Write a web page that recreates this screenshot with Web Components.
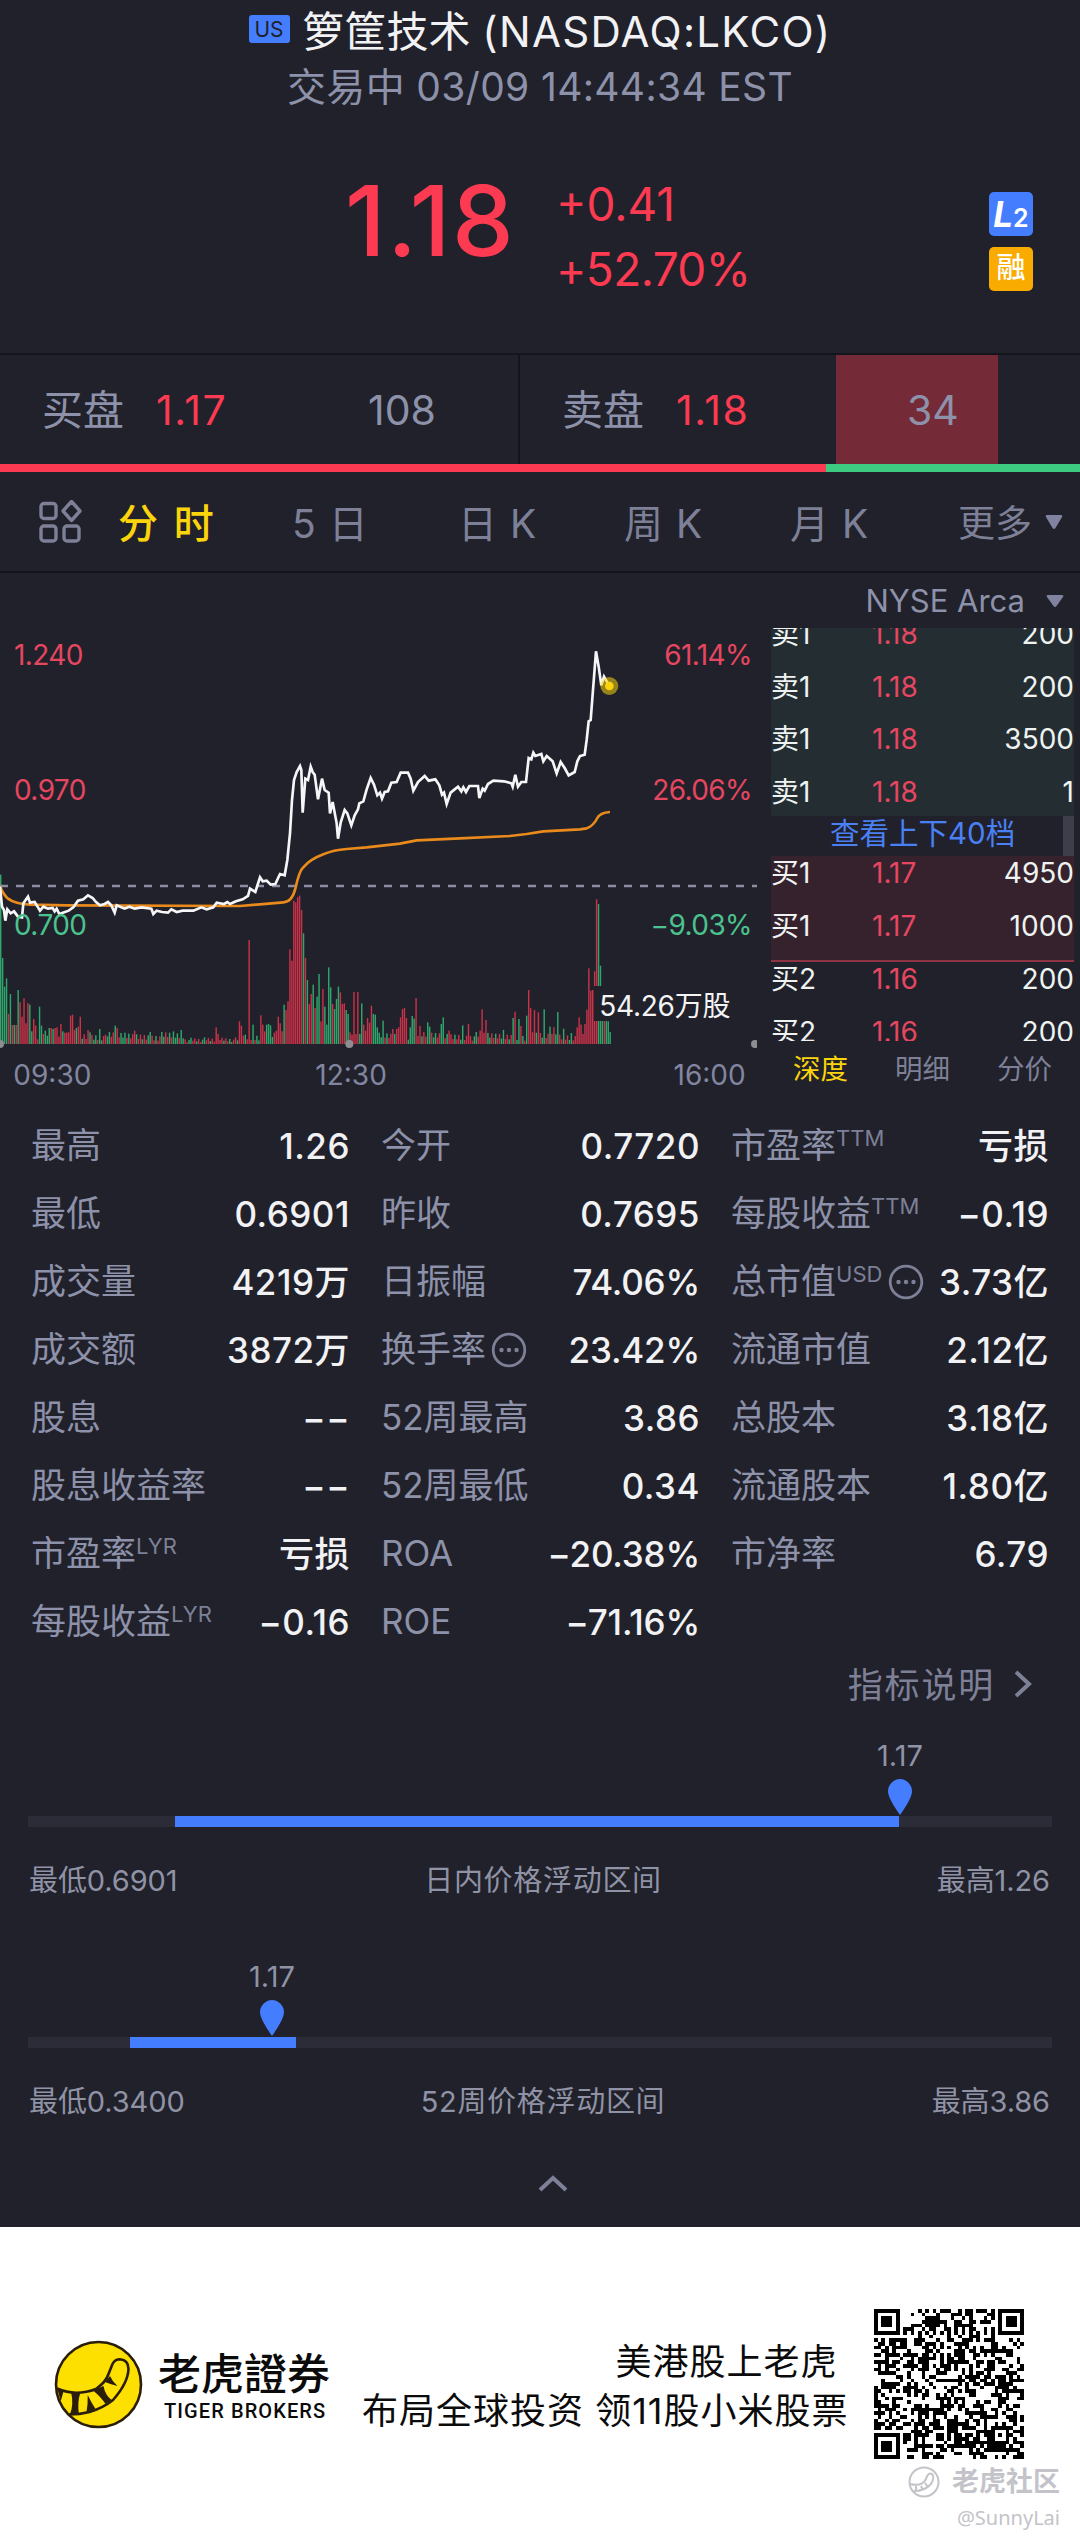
<!DOCTYPE html>
<html lang="zh-CN">
<head>
<meta charset="UTF-8">
<title>箩筐技术 LKCO</title>
<style>
    body {
        margin: 0;
        width: 1080px;
        background: #20212a;
        color: #8d91a9;
        font-family: Inter, "Noto Sans CJK SC", sans-serif;
        --red: #fc3a51;
        --green: #3dcb81;
        --blue: #447dfe;
        --muted: #7d8097;
        --label: #8d91a9;
        --text: #f2f2f5;
        --line: #14141c;
        --yellow: #fbd40c;
    }
</style>
</head>
<body>
<stock-header market="US" status="交易中 03/09 14:44:34 EST">箩筐技术 <span style="letter-spacing:1.300px">(NASDAQ:LKCO)</span></stock-header>
<quote-panel price="1.18" change="+0.41" percent="+52.70%"></quote-panel>
<bid-ask></bid-ask>
<period-tabs></period-tabs>
<chart-section>
    <price-chart slot="chart"></price-chart>
    <order-depth slot="depth"></order-depth>
</chart-section>
<stats-grid></stats-grid>
<price-range value="1.17" low="最低0.6901" high="最高1.26" name="日内价格浮动区间" from="147" to="871" pin="872"></price-range>
<price-range value="1.17" low="最低0.3400" high="最高3.86" name="52周价格浮动区间" from="102" to="268" pin="244"></price-range>
<collapse-arrow></collapse-arrow>
<brand-footer></brand-footer>

<script>
// Base class: puts the markup of each element in its open shadow root
class BaseElement extends HTMLElement {
    connectedCallback(){
        if(this.shadowRoot) return;
        this.attachShadow({mode: 'open'});
        const template = document.createElement('template');
        template.innerHTML = this.render();
        this.shadowRoot.appendChild(template.content.cloneNode(true));
    }
    attr(name){
        return this.getAttribute(name) || '';
    }
}

// Stock name and trading status
class StockHeader extends BaseElement {
    render(){
        return `
            <style>
                :host { display: block; height: 112px; text-align: center; }
                .name {
                    display: flex;
                    justify-content: center;
                    align-items: center;
                    gap: 13px;
                    height: 57px;
                    padding-bottom: 5px;
                    font-size: 42px;
                    color: var(--text);
                    white-space: pre;
                }
                .market {
                    width: 41px;
                    height: 28px;
                    border-radius: 3px;
                    background: var(--blue);
                    color: #20212a;
                    font-size: 21px;
                    line-height: 29px;
                }
                .status { font-size: 39px; line-height: 50px; letter-spacing: .350px; }
            </style>
            <div class="name"><span class="market">${this.attr('market')}</span><span><slot></slot></span></div>
            <div class="status">${this.attr('status')}</div>
        `;
    }
}
customElements.define('stock-header', StockHeader);

// Last price with the change and the account badges
class QuotePanel extends BaseElement {
    render(){
        return `
            <style>
                :host {
                    display: flex;
                    align-items: flex-start;
                    box-sizing: border-box;
                    height: 241px;
                    padding: 60px 47px 0 345px;
                    color: var(--red);
                }
                .price { font-size: 98px; line-height: 98px; font-weight: 450; width: 211px; letter-spacing: 1.500px; }
                .change { font-size: 46px; line-height: 65px; }
                .change div:last-child { letter-spacing: -.600px; }
                .badges { margin: 20px 0 0 auto; display: grid; gap: 11px; }
                .badge { width: 44px; height: 44px; border-radius: 5px; background: var(--blue); color: #fff; text-align: center; line-height: 44px; }
                .badge i { font-size: 35px; font-weight: 700; }
                .badge b { font-size: 25px; font-weight: 600; }
                .margin { background: #f9ab00; font-size: 29px; line-height: 42px; font-weight: 500; }
            </style>
            <div class="price">${this.attr('price')}</div>
            <div class="change"><div>${this.attr('change')}</div><div>${this.attr('percent')}</div></div>
            <div class="badges">
                <div class="badge"><i>L</i><b>2</b></div>
                <div class="badge margin">融</div>
            </div>
        `;
    }
}
customElements.define('quote-panel', QuotePanel);

// Best bid and ask with the ratio bar below
class BidAsk extends BaseElement {
    render(){
        return `
            <style>
                :host { display: block; border-top: 2px solid var(--line); font-size: 41px; }
                .sides { display: flex; height: 109px; line-height: 110px; }
                .side { display: flex; box-sizing: border-box; }
                .bid { width: 520px; padding-left: 42px; border-right: 2px solid var(--line); }
                .ask { flex: 1; padding-left: 42px; }
                .price { color: var(--red); margin-left: 32px; width: 126px; letter-spacing: 1.600px; }
                .bid .size { margin-left: 86px; }
                .ask .size { width: 91px; padding-left: 71px; margin-left: 34px; background: #752a37; }
                .ratio { display: flex; height: 8px; background: var(--green); }
                .ratio div { width: 826px; background: var(--red); }
            </style>
            <div class="sides">
                <div class="side bid"><span>买盘</span><span class="price">1.17</span><span class="size">108</span></div>
                <div class="side ask"><span>卖盘</span><span class="price">1.18</span><span class="size">34</span></div>
            </div>
            <div class="ratio"><div></div></div>
        `;
    }
}
customElements.define('bid-ask', BidAsk);

// Chart period selector
class PeriodTabs extends BaseElement {
    render(){
        return `
            <style>
                :host {
                    display: flex;
                    align-items: center;
                    box-sizing: border-box;
                    height: 101px;
                    padding: 0 16px 0 38px;
                    border-bottom: 2px solid var(--line);
                    color: var(--muted);
                    font-size: 39px;
                }
                span { white-space: pre; word-spacing: 2px; margin-top: -2px; }
                .on { color: var(--yellow); font-weight: 500; font-size: 40px; width: 174px; margin-left: 35px; word-spacing: 5px; }
                .more { margin-left: auto; font-size: 37px; }
                .arrow { margin-left: 12px; }
            </style>
            <svg width="45" height="44" viewBox="0 0 45 44" fill="none" stroke="#7d8097" stroke-width="3.4">
                <rect x="3" y="3.500" width="15" height="15" rx="3"/>
                <path d="M33.500 1.500 42 11 33.500 20.500 25 11Z" stroke-linejoin="round"/>
                <rect x="3" y="26" width="15" height="15" rx="3"/>
                <rect x="26" y="26" width="15" height="15" rx="3"/>
            </svg>
            <span class="on">分 时</span>
            <span style="width:166px">5 日</span>
            <span style="width:166px">日 K</span>
            <span style="width:166px">周 K</span>
            <span>月 K</span>
            <span class="more">更多</span>
            <svg class="arrow" width="20" height="16"><path d="M3 1H17Q19 1 18 3L11.500 14Q10 16 8.500 14L2 3Q1 1 3 1Z" fill="#8083a0"/></svg>
        `;
    }
}
customElements.define('period-tabs', PeriodTabs);

// Two columns: intraday chart, order depth
class ChartSection extends BaseElement {
    render(){
        return `
            <style>
                :host { display: flex; justify-content: space-between; height: 539px; }
            </style>
            <slot name="chart"></slot>
            <slot name="depth"></slot>
        `;
    }
}
customElements.define('chart-section', ChartSection);

// Drawing units of the chart are a third of a pixel
const PRICE = '0,800 6,860 12,870 16,902 22,868 32,880 42,874 54,890 66,892 70,850 84,830 90,848 104,846 114,862 120,872 130,860 144,866 158,864 164,874 170,866 178,882 206,872 220,862 234,842 250,838 264,826 278,834 288,846 300,856 314,852 324,846 334,856 344,878 350,856 364,862 374,866 388,860 404,866 424,862 454,866 460,882 470,872 486,876 504,878 514,868 530,876 548,872 580,872 604,862 620,868 640,862 650,848 672,852 682,846 690,852 708,844 728,838 744,828 750,806 766,816 780,772 788,784 800,782 812,794 826,792 840,762 854,766 862,720 870,640 876,540 882,480 890,456 900,438 904,450 908,578 916,476 924,480 932,440 938,456 944,464 954,538 966,476 974,510 986,518 990,580 998,546 1010,610 1014,656 1022,608 1034,570 1042,580 1054,616 1064,586 1074,568 1078,550 1090,544 1100,508 1112,474 1122,494 1132,526 1140,518 1146,536 1154,516 1164,514 1174,488 1190,486 1202,458 1224,458 1232,476 1240,512 1254,486 1274,468 1286,482 1306,478 1318,496 1326,524 1332,518 1340,552 1352,518 1374,500 1384,514 1390,502 1398,516 1408,498 1434,498 1438,534 1448,506 1454,512 1464,492 1480,482 1512,484 1534,490 1538,500 1546,464 1554,500 1564,486 1578,486 1586,414 1594,418 1600,398 1606,408 1624,402 1630,424 1640,408 1658,424 1670,460 1682,426 1694,444 1706,466 1724,456 1732,424 1740,408 1754,404 1760,360 1766,304 1772,300 1788,94 1796,140 1804,196 1812,170 1828,198';
const AVERAGE = 'M0 800Q12 826 24 836Q45 852 90 854L200 856 720 858 850 847Q876 846 886 806Q898 752 910 742Q930 718 970 703Q1000 690 1040 687L1100 682 1200 671 1250 661 1380 655 1530 648 1580 642 1630 634 1740 628 1760 625Q1780 618 1792 594Q1800 578 1830 576';

// Minute volumes as index: colour + height, quiet minutes are filled in below
const VOLUME = {
    0: 'g508', 1: 'g258', 2: 'g172', 3: 'g197', 4: 'r90', 5: 'g150', 6: 'r57', 7: 'g57', 8: 'r57', 9: 'g162',
    10: 'r125', 11: 'r82', 12: 'r137', 13: 'r62', 14: 'r123', 15: 'g118', 16: 'g38', 17: 'r75', 18: 'r55', 20: 'g112',
    21: 'g55', 22: 'r30', 23: 'g40', 25: 'g48', 26: 'r48', 27: 'g45', 28: 'r48', 29: 'r50', 31: 'r60', 32: 'g38',
    33: 'r34', 34: 'r34', 35: 'r35', 36: 'r85', 37: 'r88', 38: 'r42', 39: 'g48', 40: 'r52', 41: 'r82', 45: 'r42',
    46: 'g35', 51: 'g45', 54: 'r28', 59: 'g55', 60: 'r48', 64: 'g34', 69: 'r40', 77: 'g36', 89: 'g38', 93: 'g42',
    111: 'r50', 112: 'r30', 123: 'r68', 124: 'r55', 125: 'r25', 128: 'r312', 129: 'r12', 130: 'g58', 134: 'r86', 135: 'r58',
    136: 'r38', 137: 'g58', 138: 'g60', 139: 'g56', 142: 'r40', 143: 'r82', 144: 'r62', 145: 'r38', 146: 'g118', 147: 'r102',
    148: 'r128', 149: 'r284', 150: 'r250', 151: 'r430', 152: 'r425', 153: 'r440', 154: 'r445', 155: 'r402', 156: 'g332', 157: 'r258',
    158: 'g192', 159: 'r120', 160: 'r150', 161: 'g178', 162: 'r108', 163: 'g142', 164: 'g210', 165: 'r68', 166: 'r165', 167: 'g112',
    168: 'g58', 169: 'g230', 170: 'g170', 171: 'r120', 172: 'g105', 173: 'g135', 174: 'g172', 175: 'r155', 176: 'r120', 177: 'r122',
    178: 'g102', 179: 'g90', 180: 'r35', 181: 'r28', 182: 'r156', 183: 'r30', 184: 'r156', 185: 'g30', 186: 'g122', 187: 'r58',
    188: 'r40', 189: 'r78', 190: 'r64', 191: 'r115', 192: 'g90', 193: 'g88', 194: 'g50', 197: 'g70', 202: 'r45', 204: 'r45',
    205: 'r50', 206: 'r80', 207: 'r105', 208: 'r108', 209: 'r78', 211: 'g50', 212: 'g84', 213: 'g76', 214: 'r138', 216: 'r54',
    220: 'g65', 221: 'g52', 227: 'g60', 228: 'g80', 231: 'r40', 238: 'g56', 241: 'r60', 247: 'r40', 248: 'r104', 250: 'r72',
    259: 'g42', 264: 'g78', 265: 'r97', 267: 'g75', 268: 'r54', 271: 'g85', 272: 'r162', 273: 'r108', 275: 'r102', 277: 'r95',
    280: 'g104', 283: 'g52', 285: 'r50', 287: 'g96', 290: 'g46', 294: 'g33', 297: 'r50', 298: 'r80', 299: 'r58', 300: 'r30',
    301: 'r60', 302: 'r103', 303: 'r227', 304: 'r160', 305: 'r162', 306: 'r218', 307: 'r434', 308: 'g420', 309: 'g235', 310: 'g150',
    311: 'r110', 312: 'g70', 313: 'g68', 314: 'g36'
};

// Intraday price, average and volume
class PriceChart extends BaseElement {
    bars(){
        let html = '';
        for(let i = 0; i < 315; i++){
            let item = VOLUME[i];
            if(!item){
                const height = i > 94 && i < 123 ? 5 + (i * 7) % 16 : 10 + (i * 13) % 27;
                item = ((i * 5) % 7 < 3 ? 'g' : 'r') + height;
            }
            const height = Number(item.slice(1));
            const colour = item[0] === 'g' ? '#2fa76c' : '#c93249';
            html += `<rect x="${(i * 5.823).toFixed(1)}" y="${1272 - height}" width="4.300" height="${height}" fill="${colour}"/>`;
        }
        return html;
    }
    render(){
        return `
            <style>
                :host { display: block; width: 757px; padding-top: 47px; }
                svg { display: block; }
                text { font-size: 84px; font-family: Inter, "Noto Sans CJK SC", sans-serif; }
                .up { fill: #e54660; letter-spacing: -1.800px; }
                .down { fill: #4cc28e; letter-spacing: -1.800px; }
                .time { fill: #8386a0; }
                .end { text-anchor: end; }
            </style>
            <svg width="757" height="480" viewBox="0 0 2271 1440">
                ${this.bars()}
                <rect x="1782" y="1098" width="474" height="105" fill="#20212a"/>
                <path d="M0 798H2271" stroke="#8b8da0" stroke-width="8" stroke-dasharray="24 24"/>
                <path d="${AVERAGE}" fill="none" stroke="#e98a1c" stroke-width="8"/>
                <polyline points="${PRICE}" fill="none" stroke="#f6f6f8" stroke-width="8"/>
                <circle cx="1828" cy="198" r="27" fill="#fbd40c" opacity=".55"/>
                <circle cx="1828" cy="198" r="13" fill="#fbd40c"/>
                <g fill="#8e8e92"><circle cx="0" cy="1272" r="12"/><circle cx="1048" cy="1272" r="12"/><circle cx="2265" cy="1272" r="12"/></g>
                <text class="up" x="42" y="135">1.240</text>
                <text class="up" x="42" y="540">0.970</text>
                <text class="down" x="42" y="944">0.700</text>
                <text class="up end" x="2256" y="135">61.14%</text>
                <text class="up end" x="2256" y="540">26.06%</text>
                <text class="down end" x="2256" y="944">−9.03%</text>
                <text class="time" x="40" y="1394">09:30</text>
                <text class="time" x="946" y="1394">12:30</text>
                <text class="time end" x="2237" y="1394">16:00</text>
                <text x="1798" y="1187" fill="#f4f4f6" letter-spacing="-0.800">54.26万股</text>
            </svg>
        `;
    }
}
customElements.define('price-chart', PriceChart);

// One price level
class DepthRow extends BaseElement {
    render(){
        return `
            <style>
                :host { display: flex; flex: none; height: 52.700px; line-height: 35px; font-size: 28px; color: #eef3f1; }
                span { width: 101px; }
                b { font-weight: 400; color: #e54660; }
                i { font-style: normal; margin-left: auto; }
            </style>
            <span><slot></slot></span><b>${this.attr('price')}</b><i>${this.attr('size')}</i>
        `;
    }
}
customElements.define('depth-row', DepthRow);

// Order book, scrolled so that the first and last levels are cut
class OrderDepth extends BaseElement {
    render(){
        return `
            <style>
                :host { display: block; width: 309px; }
                .exchange { display: flex; align-items: center; height: 55px; padding-right: 16px; font-size: 31px; justify-content: flex-end; gap: 21px; }
                .list { width: 303px; height: 413px; overflow: hidden; }
                .asks, .bids { display: flex; flex-direction: column; box-sizing: border-box; }
                .asks { height: 188px; justify-content: flex-end; background: #232d32; overflow: hidden; }
                .asks depth-row:last-child { height: 41px; }
                .bids { height: 106px; background: #35222d; border-bottom: 2px solid #8d3341; }
                .link { display: flex; justify-content: space-between; height: 40px; line-height: 34px; font-size: 29.500px; color: #4a80f4; padding-left: 59px; }
                .bar { width: 11px; background: #3e3e4b; }
                .tabs { display: flex; justify-content: space-between; padding: 0 28px 0 22px; line-height: 57px; font-size: 27.500px; color: var(--muted); }
                .on { color: var(--yellow); }
            </style>
            <div class="exchange"><span>NYSE Arca</span><svg width="18" height="14"><path d="M2 1H16Q18 1 17 3L10.500 12Q9 14 7.500 12L1 3Q0 1 2 1Z" fill="#8083a0"/></svg></div>
            <div class="list">
                <div class="asks">
                    <depth-row price="1.18" size="200">卖1</depth-row>
                    <depth-row price="1.18" size="200">卖1</depth-row>
                    <depth-row price="1.18" size="3500">卖1</depth-row>
                    <depth-row price="1.18" size="1">卖1</depth-row>
                </div>
                <div class="link"><span>查看上下40档</span><span class="bar"></span></div>
                <div class="bids">
                    <depth-row price="1.17" size="4950">买1</depth-row>
                    <depth-row price="1.17" size="1000">买1</depth-row>
                </div>
                <depth-row price="1.16" size="200">买2</depth-row>
                <depth-row price="1.16" size="200">买2</depth-row>
            </div>
            <div class="tabs"><span class="on">深度</span><span>明细</span><span>分价</span></div>
        `;
    }
}
customElements.define('order-depth', OrderDepth);

// Label and value of one indicator
class StatItem extends BaseElement {
    render(){
        const percent = this.textContent.includes('%');
        const info = this.hasAttribute('info') ? `
            <svg width="36" height="36" viewBox="0 0 36 36"><circle cx="18" cy="18" r="15.800" fill="none" stroke="#7d8097" stroke-width="2.800"/>
            <g fill="#7d8097"><circle cx="10.500" cy="18" r="2.200"/><circle cx="18" cy="18" r="2.200"/><circle cx="25.500" cy="18" r="2.200"/></g></svg>` : '';
        return `
            <style>
                :host { display: flex; align-items: center; height: 68px; font-size: 35px; line-height: 68px; white-space: nowrap; }
                span { margin-top: -2px; }
                sup { font-size: 22px; line-height: 22px; align-self: flex-start; margin-top: 15px; color: var(--muted); }
                svg { margin-left: 5px; }
                sup + svg { margin-left: 6px; }
                b { margin-left: auto; font-weight: 500; color: var(--text); letter-spacing: ${percent ? -0.2 : 0.5}px; }
            </style>
            <span>${this.attr('label')}</span>${this.attr('sup') ? `<sup>${this.attr('sup')}</sup>` : ''}${info}
            <b><slot></slot></b>
        `;
    }
}
customElements.define('stat-item', StatItem);

class StatsGrid extends BaseElement {
    render(){
        return `
            <style>
                :host { display: block; }
                .grid { display: grid; grid-template-columns: 319px 319px 318px; column-gap: 31px; padding-left: 31px; }
                .note { display: flex; align-items: center; justify-content: flex-end; gap: 19px; height: 55px; padding-right: 48px; font-size: 35px; letter-spacing: 1.800px; color: var(--muted); }
                .note span { margin-top: -2px; }
            </style>
            <div class="grid">
                <stat-item label="最高">1.26</stat-item>
                <stat-item label="今开">0.7720</stat-item>
                <stat-item label="市盈率" sup="TTM">亏损</stat-item>
                <stat-item label="最低">0.6901</stat-item>
                <stat-item label="昨收">0.7695</stat-item>
                <stat-item label="每股收益" sup="TTM">−0.19</stat-item>
                <stat-item label="成交量">4219万</stat-item>
                <stat-item label="日振幅">74.06%</stat-item>
                <stat-item label="总市值" sup="USD" info>3.73亿</stat-item>
                <stat-item label="成交额">3872万</stat-item>
                <stat-item label="换手率" info>23.42%</stat-item>
                <stat-item label="流通市值">2.12亿</stat-item>
                <stat-item label="股息">−−</stat-item>
                <stat-item label="52周最高">3.86</stat-item>
                <stat-item label="总股本">3.18亿</stat-item>
                <stat-item label="股息收益率">−−</stat-item>
                <stat-item label="52周最低">0.34</stat-item>
                <stat-item label="流通股本">1.80亿</stat-item>
                <stat-item label="市盈率" sup="LYR">亏损</stat-item>
                <stat-item label="ROA">−20.38%</stat-item>
                <stat-item label="市净率">6.79</stat-item>
                <stat-item label="每股收益" sup="LYR">−0.16</stat-item>
                <stat-item label="ROE">−71.16%</stat-item>
            </div>
            <div class="note"><span>指标说明</span><svg width="18" height="28" fill="none" stroke="#7d8097" stroke-width="4"><path d="M2 2 15 14 2 26"/></svg></div>
        `;
    }
}
customElements.define('stats-grid', StatsGrid);

// Track with the traded range and a pin for the last price
class PriceRange extends BaseElement {
    render(){
        const from = Number(this.attr('from'));
        const to = Number(this.attr('to'));
        const pin = Number(this.attr('pin'));
        return `
            <style>
                :host { display: block; box-sizing: border-box; height: 221px; padding: 25px 28px 0; font-size: 29px; color: #9093a6; }
                .pin { display: flex; flex-direction: column; align-items: center; width: 60px; line-height: 40px; margin-left: ${pin - 30}px; }
                .pin svg { display: block; margin-top: 3px; }
                .track { height: 11px; margin-top: 1px; background: #2c2c38; }
                .track div { width: ${to - from}px; height: 11px; margin-left: ${from}px; background: var(--blue); }
                .labels { display: grid; grid-template-columns: 1fr auto 1fr; margin-top: 34px; padding: 0 2px 0 1px; line-height: 40px; letter-spacing: -.100px; }
                .labels :nth-child(2) { letter-spacing: .700px; padding-left: 7px; }
                .labels :last-child { text-align: right; }
            </style>
            <div class="pin"><span>${this.attr('value')}</span><svg width="26" height="36"><path d="M13 0A12.500 12.500 0 0 1 25 12.500Q25 19 13 36Q1 19 1 12.500A12.500 12.500 0 0 1 13 0Z" fill="#447dfe"/></svg></div>
            <div class="track"><div></div></div>
            <div class="labels"><span>${this.attr('low')}</span><span>${this.attr('name')}</span><span>${this.attr('high')}</span></div>
        `;
    }
}
customElements.define('price-range', PriceRange);

class CollapseArrow extends BaseElement {
    render(){
        return `
            <style>
                :host { display: flex; justify-content: center; align-items: center; height: 74px; padding: 0 0 0 26px; box-sizing: border-box; }
                svg { margin-top: -15px; }
            </style>
            <svg width="30" height="18" fill="none" stroke="#7d8097" stroke-width="4"><path d="M2 16 15 4 28 16"/></svg>
        `;
    }
}
customElements.define('collapse-arrow', CollapseArrow);

// 41 x 41 module code
class QrCode extends BaseElement {
    render(){
        const size = 41;
        const inFinder = (x, y) => (x < 8 && y < 8) || (x > 32 && y < 8) || (x < 8 && y > 32);
        const ring = (x, y, cx, cy) => Math.max(Math.abs(x - cx), Math.abs(y - cy));
        let seed = 77;
        let path = '';
        for(let y = 0; y < size; y++){
            for(let x = 0; x < size; x++){
                seed = (seed * 1103515245 + 12345) % 2147483648;
                let dark = (seed >> 16) % 100 < 52;
                if(inFinder(x, y)){
                    const d = ring(x, y, x > 32 ? 37 : 3, y > 32 ? 37 : 3);
                    dark = d < 2 || d === 3;
                } else if(ring(x, y, 34, 34) < 3){
                    dark = ring(x, y, 34, 34) !== 1;
                } else if(x === 6 || y === 6){
                    dark = (x + y) % 2 === 0;
                }
                if(dark) path += `M${x} ${y}h1v1h-1z`;
            }
        }
        return `
            <style>
                :host { display: block; width: 150px; height: 150px; }
                svg { display: block; }
            </style>
            <svg width="150" height="150" viewBox="0 0 41 41" shape-rendering="crispEdges"><path d="${path}"/></svg>
        `;
    }
}
customElements.define('qr-code', QrCode);

// Broker logo, slogan, code and the community mark
class BrandFooter extends BaseElement {
    render(){
        return `
            <style>
                :host { display: flex; align-items: flex-start; position: relative; box-sizing: border-box; height: 317px; padding: 82px 56px 0 54px; background: #fff; color: #0b0b0b; }
                .logo { margin-top: 31px; }
                .brand { margin: 36px 0 0 14px; width: 175px; }
                .brand div { font: 500 43px/52px "Noto Sans CJK TC", sans-serif; }
                .brand small { display: block; font: 500 20px/24px Roboto, sans-serif; letter-spacing: 1.100px; margin: 2px 0 0 6px; white-space: nowrap; }
                .slogan { margin: 29px 0 0 29px; width: 482px; display: grid; justify-items: end; font-size: 36px; line-height: 49px; letter-spacing: 1px; white-space: nowrap; }
                .slogan div:first-child { padding-right: 11px; }
                qr-code { margin-left: auto; margin-top: 0; }
                .mark { position: absolute; right: 20px; top: 237px; display: grid; justify-items: end; color: #c3c3c9; }
                .mark div { display: flex; align-items: center; gap: 12px; font-size: 27px; line-height: 36px; font-weight: 700; }
                .mark small { font: 20px/36px "Noto Sans", sans-serif; }
            </style>
            <svg class="logo" width="90" height="90" viewBox="0 0 90 90">
                <circle cx="44.500" cy="44.500" r="42.500" fill="#fddf00" stroke="#2a1e0a" stroke-width="2.600"/>
                <path d="M3 48.500Q13 52.700 22 52.700 33 52.700 42 49Q52 42 54.500 34L58.500 24Q61 19.300 66 19.300 74.500 20 74.500 29 74 43 59 60 49 68 35.500 72 26 74.500 15 74.500" fill="none" stroke="#2a1e0a" stroke-width="2.600"/>
                <g fill="#2a1e0a">
                    <path d="M3 47.500 9.300 52 6.700 61.500Z"/>
                    <path d="M17 52 26.500 52Q23 63 25 74.500L16 74.500Q20 64 17 52Z"/>
                    <path d="M33.700 55Q37 62 41.500 69L32.500 72Q34 64 33.700 55Z"/>
                    <path d="M39 50.500 49.500 46Q51 55 57.500 60L51.500 64Q47 57 39 50.500Z"/>
                    <path d="M51 42 56 36Q58 41 63.500 46 57 44.500 51 42Z"/>
                </g>
            </svg>
            <div class="brand"><div>老虎證券</div><small>TIGER BROKERS</small></div>
            <div class="slogan"><div>美港股上老虎</div><div>布局全球投资 领11股小米股票</div></div>
            <qr-code></qr-code>
            <div class="mark">
                <div><svg width="32" height="32" viewBox="0 0 32 32" fill="none" stroke="#c3c3c9" stroke-width="2"><circle cx="16" cy="16" r="14.500"/><path d="M2 18Q14 21 18 13Q20 6 24 8Q27 11 23 18Q17 25 6 25M8 20V25M13 20 15 24M17 17 20 21"/></svg>老虎社区</div>
                <small>@SunnyLai</small>
            </div>
        `;
    }
}
customElements.define('brand-footer', BrandFooter);
</script>
</body>
</html>
